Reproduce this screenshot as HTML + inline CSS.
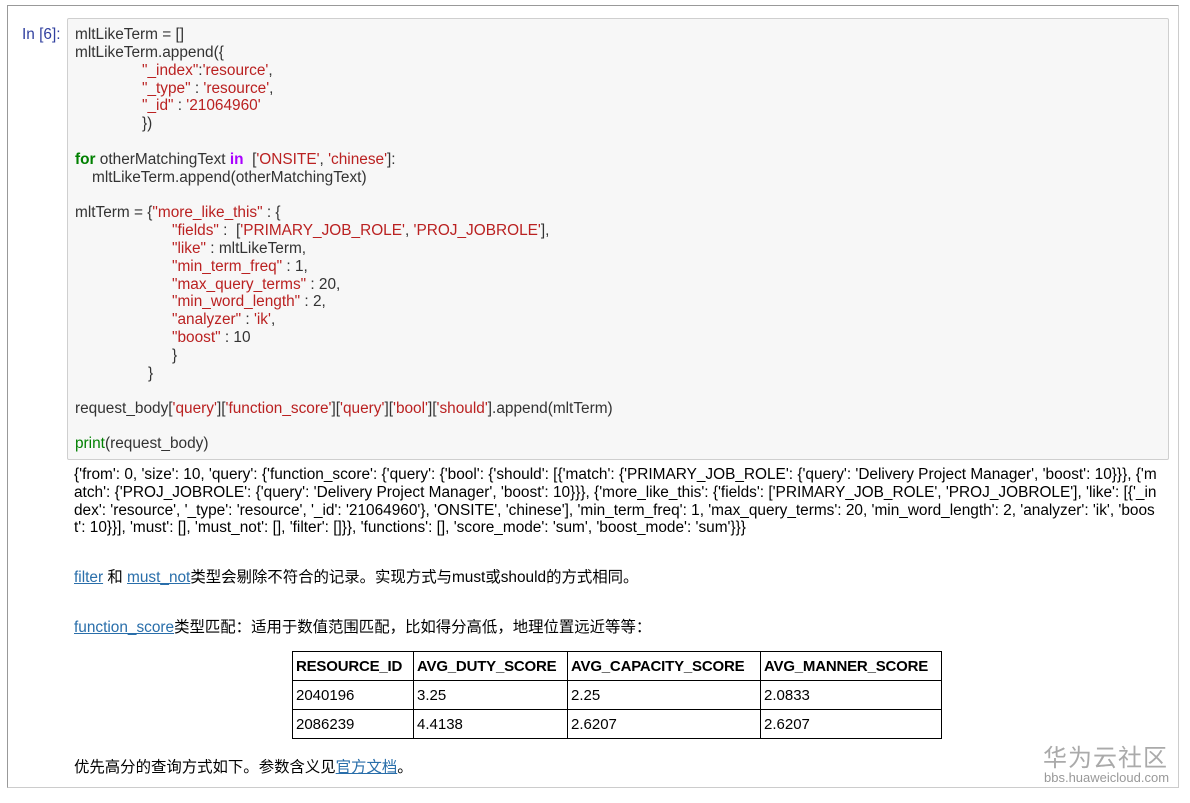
<!DOCTYPE html>
<html><head><meta charset="utf-8"><style>
body{margin:0;width:1190px;height:803px;background:#fff;position:relative;overflow:hidden;font-family:"Liberation Sans","Noto Sans CJK SC",sans-serif;font-size:15.4px;color:#222}
.frame{position:absolute;left:7px;top:5px;width:1170px;height:781px;border:1px solid #999;border-right-color:#ccc;border-bottom-color:#ccc}
.cell{position:absolute;left:67px;top:18px;width:1100px;height:440px;background:#f7f7f7;border:1px solid #cfcfcf;border-radius:2px}
.l{position:absolute;white-space:pre;line-height:18px;color:#333;letter-spacing:0px}
.s{color:#ba2121}.k{color:#008000;font-weight:bold}.o{color:#a0f;font-weight:bold}.b{color:#008000}
.p{position:absolute;white-space:pre;color:#000}
a{color:#296eaa;text-decoration:underline}
table{position:absolute;left:292px;top:651px;border-collapse:collapse;color:#000;table-layout:fixed}
td,th{border:1px solid #000;padding:0 3px;height:28px;text-align:left;font-size:15px;white-space:nowrap;overflow:hidden}
th{font-weight:bold;letter-spacing:-0.2px}
</style></head><body>
<div class="frame"></div>
<div class="l" style="left:22px;top:26px;color:#303f9f">In [6]:</div>
<div class="cell"></div>
<div class="l" style="left:75px;top:26px">mltLikeTerm = []</div>
<div class="l" style="left:75px;top:44px">mltLikeTerm.append({</div>
<div class="l" style="left:142px;top:62px"><span class="s">"_index"</span>:<span class="s">'resource'</span>,</div>
<div class="l" style="left:142px;top:80px"><span class="s">"_type"</span> : <span class="s">'resource'</span>,</div>
<div class="l" style="left:142px;top:97px"><span class="s">"_id"</span> : <span class="s">'21064960'</span></div>
<div class="l" style="left:142px;top:115px">})</div>
<div class="l" style="left:75px;top:151px"><span class="k">for</span> otherMatchingText <span class="o">in</span>  [<span class="s">'ONSITE'</span>, <span class="s">'chinese'</span>]:</div>
<div class="l" style="left:92px;top:169px">mltLikeTerm.append(otherMatchingText)</div>
<div class="l" style="left:75px;top:204px">mltTerm = {<span class="s">"more_like_this"</span> : {</div>
<div class="l" style="left:172px;top:222px"><span class="s">"fields"</span> :  [<span class="s">'PRIMARY_JOB_ROLE'</span>, <span class="s">'PROJ_JOBROLE'</span>],</div>
<div class="l" style="left:172px;top:240px"><span class="s">"like"</span> : mltLikeTerm,</div>
<div class="l" style="left:172px;top:258px"><span class="s">"min_term_freq"</span> : 1,</div>
<div class="l" style="left:172px;top:276px"><span class="s">"max_query_terms"</span> : 20,</div>
<div class="l" style="left:172px;top:293px"><span class="s">"min_word_length"</span> : 2,</div>
<div class="l" style="left:172px;top:311px"><span class="s">"analyzer"</span> : <span class="s">'ik'</span>,</div>
<div class="l" style="left:172px;top:329px"><span class="s">"boost"</span> : 10</div>
<div class="l" style="left:172px;top:347px">}</div>
<div class="l" style="left:148px;top:365px">}</div>
<div class="l" style="left:75px;top:400px">request_body[<span class="s">'query'</span>][<span class="s">'function_score'</span>][<span class="s">'query'</span>][<span class="s">'bool'</span>][<span class="s">'should'</span>].append(mltTerm)</div>
<div class="l" style="left:75px;top:435px"><span class="b">print</span>(request_body)</div>
<div class="p" style="left:74px;top:466px;line-height:17.8px;width:1100px;white-space:nowrap;letter-spacing:0px">{'from': 0, 'size': 10, 'query': {'function_score': {'query': {'bool': {'should': [{'match': {'PRIMARY_JOB_ROLE': {'query': 'Delivery Project Manager', 'boost': 10}}}, {'m<br>atch': {'PROJ_JOBROLE': {'query': 'Delivery Project Manager', 'boost': 10}}}, {'more_like_this': {'fields': ['PRIMARY_JOB_ROLE', 'PROJ_JOBROLE'], 'like': [{'_in<br>dex': 'resource', '_type': 'resource', '_id': '21064960'}, 'ONSITE', 'chinese'], 'min_term_freq': 1, 'max_query_terms': 20, 'min_word_length': 2, 'analyzer': 'ik', 'boos<br>t': 10}}], 'must': [], 'must_not': [], 'filter': []}}, 'functions': [], 'score_mode': 'sum', 'boost_mode': 'sum'}}}</div>
<div class="p" style="left:74px;top:565px"><a>filter</a> 和 <a>must_not</a>类型会剔除不符合的记录。实现方式与must或should的方式相同。</div>
<div class="p" style="left:74px;top:615px"><a>function_score</a>类型匹配：适用于数值范围匹配，比如得分高低，地理位置远近等等：</div>
<table>
<tr><th style="width:114px">RESOURCE_ID</th><th style="width:147px">AVG_DUTY_SCORE</th><th style="width:186px">AVG_CAPACITY_SCORE</th><th style="width:174px">AVG_MANNER_SCORE</th></tr>
<tr><td>2040196</td><td>3.25</td><td>2.25</td><td>2.0833</td></tr>
<tr><td>2086239</td><td>4.4138</td><td>2.6207</td><td>2.6207</td></tr>
</table>
<div class="p" style="left:74px;top:755px">优先高分的查询方式如下。参数含义见<a>官方文档</a>。</div>
<div class="p" style="left:1043px;top:738px;font-size:24px;color:#aaa;letter-spacing:1px">华为云社区</div>
<div class="p" style="left:1044px;top:770px;font-size:13px;color:#999">bbs.huaweicloud.com</div>
</body></html>
